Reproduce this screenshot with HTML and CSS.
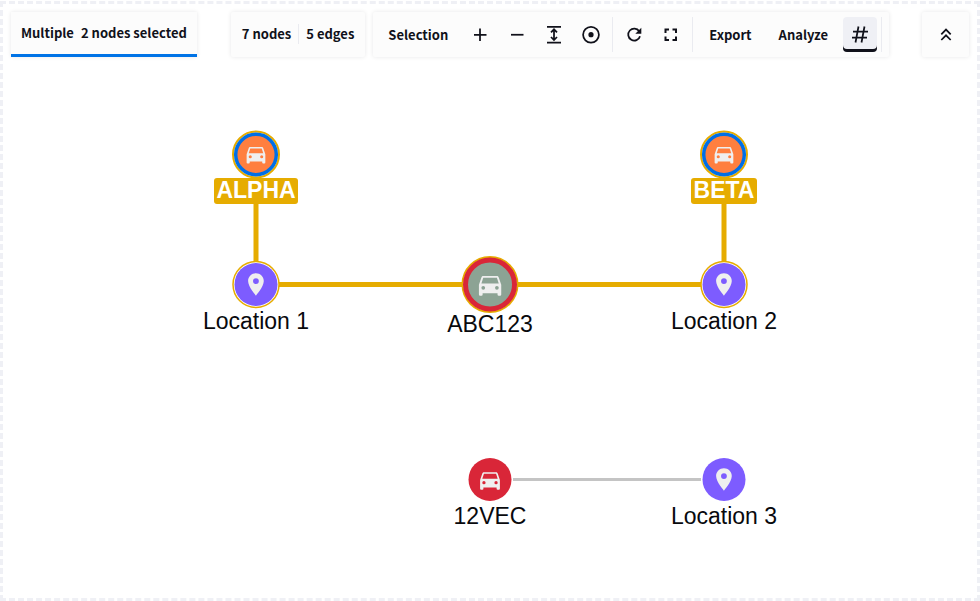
FILE: index.html
```html
<!DOCTYPE html>
<html lang="en">
<head>
<meta charset="utf-8">
<title>Graph</title>
<link rel="stylesheet" href="styles.css">
</head>
<body>
<main class="graph">
  <svg class="canvas" viewBox="3 4 974 594" role="img" aria-label="Vehicles and locations">
    <defs>
      <path id="car" fill-rule="evenodd" d="M5 11L6.500 6.500H17.500L19 11ZM17.500 16A1.500 1.500 0 0 1 16 14.500A1.500 1.500 0 0 1 17.500 13A1.500 1.500 0 0 1 19 14.500A1.500 1.500 0 0 1 17.500 16ZM6.500 16A1.500 1.500 0 0 1 5 14.500A1.500 1.500 0 0 1 6.500 13A1.500 1.500 0 0 1 8 14.500A1.500 1.500 0 0 1 6.500 16ZM18.920 6C18.720 5.420 18.160 5 17.500 5H6.500C5.840 5 5.280 5.420 5.080 6L3 12V20A1 1 0 0 0 4 21H5A1 1 0 0 0 6 20V19H18V20A1 1 0 0 0 19 21H20A1 1 0 0 0 21 20V12Z"/>
      <path id="pin" d="M12 2C8.130 2 5 5.130 5 9c0 5.250 7 13 7 13s7-7.750 7-13c0-3.870-3.130-7-7-7zm0 9.600a2.600 2.600 0 1 1 0-5.200 2.600 2.600 0 0 1 0 5.200z"/>
    </defs>

    <g class="edge edge-path">
      <path d="M256 178V262M724 178V262M279 284.500H463M517 284.500H701"/>
    </g>
    <path class="edge edge-plain" d="M513 479.500H701"/>

    <g class="node">
      <circle class="halo" cx="256" cy="154.500" r="23"/>
      <circle class="alpha" cx="256" cy="154.500" r="20.300"/>
      <use class="icon" href="#car" transform="translate(243.500 141.700) scale(1.040)"/>
      <rect class="tag" x="214" y="178" width="84" height="26" rx="3"/>
      <text class="label label-selected" x="256" y="198">ALPHA</text>
    </g>
    <g class="node">
      <circle class="halo" cx="724" cy="154.500" r="23"/>
      <circle class="alpha" cx="724" cy="154.500" r="20.300"/>
      <use class="icon" href="#car" transform="translate(711.500 141.700) scale(1.040)"/>
      <rect class="tag" x="691" y="178" width="66" height="26" rx="3"/>
      <text class="label label-selected" x="724" y="198">BETA</text>
    </g>
    <g class="node">
      <circle class="halo halo-thin" cx="256" cy="284.500" r="23"/>
      <circle class="place" cx="256" cy="284.500" r="21.500"/>
      <use class="icon" href="#pin" transform="translate(242.500 271) scale(1.120)"/>
      <text class="label" x="256" y="329">Location 1</text>
    </g>
    <g class="node">
      <circle class="halo halo-thin" cx="724" cy="284.500" r="23"/>
      <circle class="place" cx="724" cy="284.500" r="21.500"/>
      <use class="icon" href="#pin" transform="translate(710.500 271) scale(1.120)"/>
      <text class="label" x="724" y="329">Location 2</text>
    </g>
    <g class="node">
      <circle class="halo" cx="490" cy="284.500" r="27.500"/>
      <circle class="shared" cx="490" cy="284.500" r="24.500"/>
      <use class="icon" href="#car" transform="translate(475.200 269.800) scale(1.240)"/>
      <text class="label" x="490" y="332">ABC123</text>
    </g>
    <g class="node">
      <circle class="vehicle" cx="490" cy="479.500" r="21.500"/>
      <use class="icon" href="#car" transform="translate(476.800 466.700) scale(1.100)"/>
      <text class="label" x="490" y="524">12VEC</text>
    </g>
    <g class="node">
      <circle class="place" cx="724" cy="479.500" r="21.500"/>
      <use class="icon" href="#pin" transform="translate(710.500 466) scale(1.120)"/>
      <text class="label" x="724" y="524">Location 3</text>
    </g>
  </svg>

  <header class="bar">
    <div class="card selected"><span>Multiple</span><span>2 nodes selected</span></div>
    <div class="card counts"><span>7 nodes</span><span class="rule"></span><span>5 edges</span></div>
    <div class="card tools">
      <button class="tool text">Selection</button>
      <button class="tool" aria-label="Zoom in"><svg class="glyph light" viewBox="0 0 24 24"><path d="M12 5.500v12.500M6 11.750h12.500"/></svg></button>
      <button class="tool" aria-label="Zoom out"><svg class="glyph light" viewBox="0 0 24 24"><path d="M6 11.750h12.500"/></svg></button>
      <button class="tool" aria-label="Fit height"><svg class="glyph light" viewBox="0 0 24 24"><path d="M5 3.800h14M5 19.500h14M12 7v9.500M9 9.300L12 6.300l3 3M9 14l3 3 3-3"/></svg></button>
      <button class="tool" aria-label="Center"><svg class="glyph light" viewBox="0 0 24 24"><circle cx="12" cy="11.700" r="7.900"/><circle class="solid" cx="12" cy="11.700" r="2.600"/></svg></button>
      <span class="rule"></span>
      <button class="tool" aria-label="Refresh"><svg class="glyph light" viewBox="0 0 24 24"><path d="M17.200 8.200A6 6 0 1 0 18 13.200"/><path class="solid" d="M19.300 4.700v6h-6z"/></svg></button>
      <button class="tool" aria-label="Full screen"><svg class="glyph" viewBox="0 0 24 24"><path d="M6.500 10V6.500H10M13.500 6.500H17V10M17 13.500V17h-3.500M10 17H6.500v-3.500"/></svg></button>
      <span class="rule"></span>
      <button class="tool text">Export</button>
      <button class="tool text">Analyze</button>
      <button class="tool active" aria-label="Grid" aria-pressed="true"><svg class="glyph light" viewBox="0 0 24 24"><path d="M10.500 3.500L7.500 19.500M16.500 3.500L13.500 19.500M5 8.500h15M4 14.500h15"/></svg></button>
      <span class="rule"></span>
    </div>
    <button class="card collapse" aria-label="Collapse toolbar"><svg class="glyph light" viewBox="0 0 24 24"><path d="M7.300 11.300l4.700-4.700 4.700 4.700M7.300 17l4.700-4.700 4.700 4.700"/></svg></button>
  </header>
</main>
</body>
</html>
```
FILE: styles.css
```css
* { box-sizing: border-box; }

body {
  margin: 0;
  background: #fff;
  color: #10111a;
  font: bold 13px/20px "Noto Sans CJK SC", "Noto Sans", sans-serif;
}

.graph {
  position: relative;
  height: calc(100vh - 1px);
  margin-top: 1px;
  border: 3px dashed #eff0f5;
}

.canvas {
  position: absolute;
  inset: 0;
  width: 100%;
  height: 100%;
}

.edge { fill: none; }
.edge-path { stroke: #e6ac00; stroke-width: 5; }
.edge-plain { stroke: #c4c4c4; stroke-width: 3; }

.halo { fill: #fff; stroke: #e6ac00; stroke-width: 2; }
.halo-thin { stroke-width: 1.5; }
.alpha { fill: #ff7f3f; stroke: #006fe6; stroke-width: 3.5; }
.shared { fill: #8ca394; stroke: #d92638; stroke-width: 5; }
.place { fill: #7d5cff; }
.vehicle { fill: #d92638; }
.tag { fill: #e6ac00; }
.icon { fill: #efefef; }

.label {
  fill: #08090d;
  font: 23px "Liberation Sans", Arial, sans-serif;
  text-anchor: middle;
}
.label-selected { fill: #fff; font-weight: bold; }

.bar {
  position: relative;
  display: flex;
  gap: 8px;
  padding: 8px;
}

.card {
  display: flex;
  align-items: center;
  height: 45px;
  border: 0;
  border-radius: 2px;
  background: #fcfcfc;
  box-shadow: 0 0 4px rgba(16, 17, 26, 0.1);
  white-space: nowrap;
}

.selected {
  gap: 7px;
  margin-right: 26px;
  padding: 0 10px;
  border-bottom: 3px solid #0073e6;
  border-radius: 0;
}

.counts { gap: 7px; padding: 0 11px 2px; }

.rule { width: 1px; height: 20px; background: #eaebf0; }

.tools { gap: 3px; padding: 0 6px 0 3px; }
.tools .rule { height: 35px; margin: 0 1px; }

.tool {
  display: flex;
  align-items: center;
  justify-content: center;
  width: 34px;
  height: 35px;
  padding: 0;
  border: 0;
  border-radius: 4px;
  background: none;
  color: inherit;
  font: inherit;
}
.text { width: auto; padding: 0 12px; }
.active { background: #eff0f5; box-shadow: inset 0 -3px #10111a; }

.collapse {
  justify-content: center;
  width: 47px;
  margin-left: auto;
  padding: 0;
  color: inherit;
}

.glyph {
  width: 24px;
  height: 24px;
  fill: none;
  stroke: currentColor;
  stroke-width: 2;
}
.light { stroke-width: 1.75; }
.glyph .solid { fill: currentColor; stroke: none; }
```
